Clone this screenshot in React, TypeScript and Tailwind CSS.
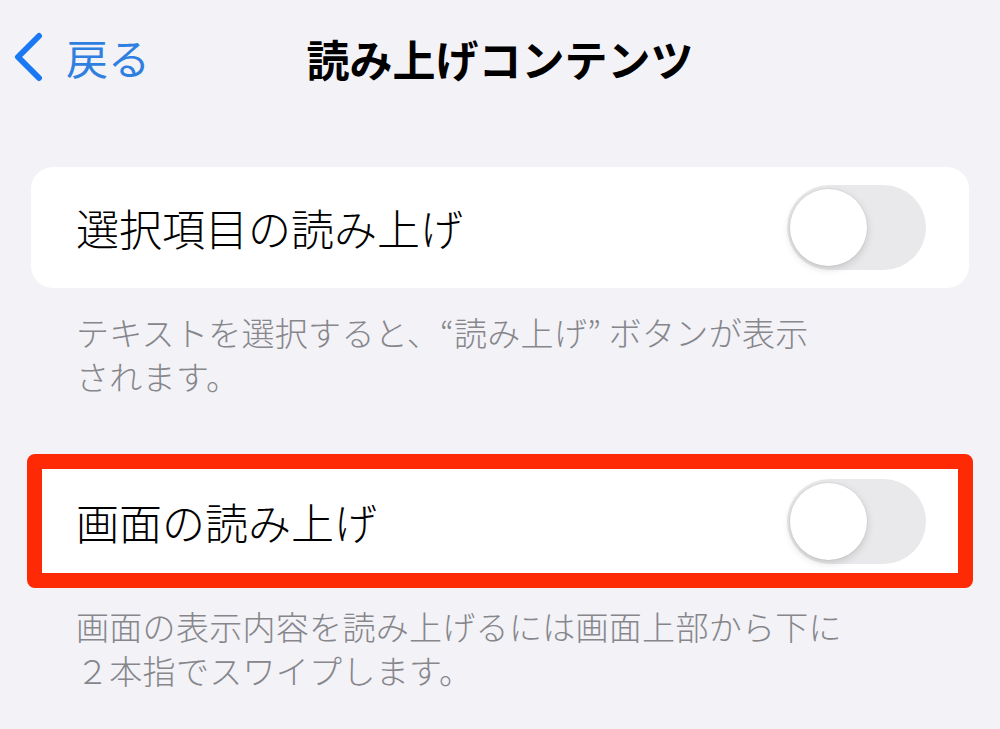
const font = { fontFamily: '"Noto Sans CJK JP", "Noto Sans", sans-serif' };

function Toggle() {
  return (
    <div className="relative w-[139px] h-[85px] rounded-full bg-[#e9e9eb] shrink-0">
      <div className="absolute left-[3px] top-[4px] w-[77px] h-[77px] rounded-full bg-white shadow-[0_3px_8px_rgba(0,0,0,0.15),0_0_0_1px_rgba(0,0,0,0.04)]" />
    </div>
  );
}

function Footnote({ lines }: { lines: string[] }) {
  return (
    <div className="px-[76px] text-[33px] leading-[44px] font-light text-[#86868b] tracking-[0.3px]">
      {lines.map((l) => (
        <div key={l}>{l}</div>
      ))}
    </div>
  );
}

export default function App() {
  return (
    <div className="w-[1000px] h-[729px] overflow-hidden bg-[#f2f2f7]" style={font}>
      <header className="h-[116px] grid grid-cols-[1fr_auto_1fr] items-center">
        <div className="flex items-center gap-[22px] pl-[12px] pb-[2px]">
          <svg width="32" height="50" viewBox="0 0 32 50">
            <path d="M27 4 L6 25 L27 46" fill="none" stroke="#1a78f2" strokeWidth="6" strokeLinecap="round" strokeLinejoin="round" />
          </svg>
          <span className="text-[42px] text-[#2f7fe0] leading-none">戻る</span>
        </div>
        <h1 className="text-[43px] font-bold text-black leading-none">読み上げコンテンツ</h1>
        <div />
      </header>

      <div className="mx-[31px] mt-[51px] h-[121px] rounded-[22px] bg-white flex items-center justify-between pl-[45px] pr-[43px]">
        <span className="text-[43px] font-light text-black leading-none">選択項目の読み上げ</span>
        <Toggle />
      </div>

      <div className="mt-[22px]">
        <Footnote lines={["テキストを選択すると、“読み上げ” ボタンが表示", "されます。"]} />
      </div>

      <div className="mx-[27px] mt-[56px] h-[134px] rounded-[8px] border-[15px] border-[#fe2a05] bg-white flex items-center justify-between pl-[34px] pr-[32px]">
        <span className="text-[43px] font-light text-black leading-none">画面の読み上げ</span>
        <Toggle />
      </div>

      <div className="mt-[16px]">
        <Footnote lines={["画面の表示内容を読み上げるには画面上部から下に", "２本指でスワイプします。"]} />
      </div>
    </div>
  );
}
